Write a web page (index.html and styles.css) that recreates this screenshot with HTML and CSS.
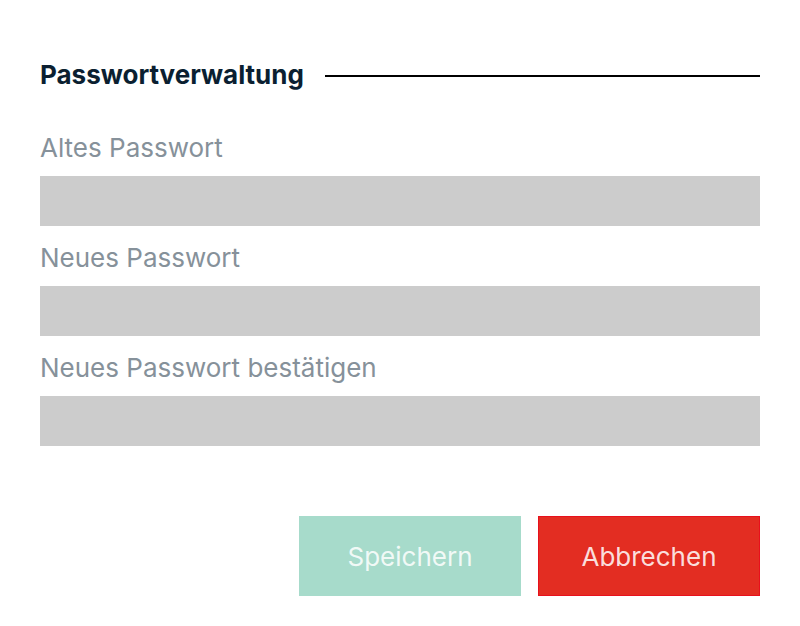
FILE: index.html
```html
<!DOCTYPE html>
<html lang="de">
<head>
    <meta charset="UTF-8">
    <meta name="viewport" content="width=device-width, initial-scale=1.0">
    <title>Passwortverwaltung</title>
    <link rel="stylesheet" href="styles.css">
</head>
<body>
    <div class="container">
        <div class="section-title">
            <h2>Passwortverwaltung</h2>
            <span class="line"></span>
        </div>
        <form class="form">
            <label class="field">
                <span class="label">Altes Passwort</span>
                <input type="password" class="input">
            </label>
            <label class="field">
                <span class="label">Neues Passwort</span>
                <input type="password" class="input">
            </label>
            <label class="field">
                <span class="label">Neues Passwort bestätigen</span>
                <input type="password" class="input">
            </label>
            <div class="actions">
                <button type="button" class="btn btn-save" disabled>Speichern</button>
                <button type="button" class="btn btn-cancel">Abbrechen</button>
            </div>
        </form>
    </div>
</body>
</html>
```

FILE: styles.css
```css
body {
    margin: 0;
    font-family: Inter, "Noto Sans", sans-serif;
    background: #ffffff;
}
.container {
    padding: 57px 40px 30px 40px;
}
.section-title {
    display: flex;
    align-items: center;
    gap: 21px;
}
.section-title h2 {
    margin: 0;
    font-size: 26px;
    font-weight: 700;
    color: #0b1f31;
    line-height: 36px;
}
.line {
    flex: 1;
    height: 2px;
    background: #000000;
    margin-top: 2px;
}
.form {
    margin-top: 40px;
}
.field {
    display: block;
}
.label {
    display: block;
    font-size: 26px;
    line-height: 30px;
    color: #86919a;
    margin: 0 0 13px 0;
}
.field + .field .label {
    margin-top: 17px;
}
.input {
    display: block;
    box-sizing: border-box;
    width: 100%;
    height: 50px;
    border: none;
    background: #cccccc;
    margin: 0;
}
.actions {
    display: flex;
    justify-content: flex-end;
    gap: 17px;
    margin-top: 70px;
}
.btn {
    width: 222px;
    height: 80px;
    font-family: Inter, "Noto Sans", sans-serif;
    font-size: 26px;
    border: 1px solid transparent;
    color: rgba(255, 255, 255, 0.85);
    cursor: pointer;
}
.btn-save {
    background: #a7dbcb;
    border-color: #a7dbcb;
}
.btn-cancel {
    background: #e32d22;
    border-color: #e8101c;
}
```
